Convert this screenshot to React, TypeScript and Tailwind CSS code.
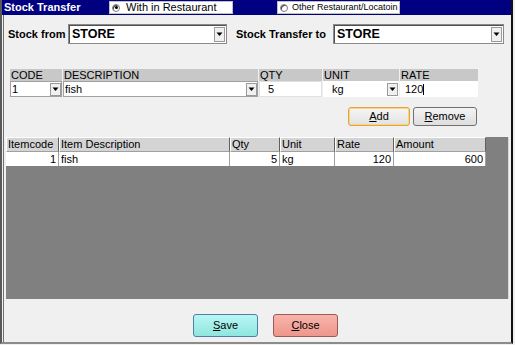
import React from "react";

const font = { fontFamily: '"Liberation Sans", Arial, sans-serif' };

function Arrow() {
  return (
    <svg width="7" height="5" viewBox="0 0 7 5">
      <path d="M0.5 0.5 H6.5 L3.5 4 Z" fill="#000" />
    </svg>
  );
}

function DropBtn({ h }: { h: string }) {
  return (
    <div className={`flex w-[11px] ${h} items-center justify-center border border-[#9a9a9a] bg-[#f0f0f0]`}>
      <Arrow />
    </div>
  );
}

function Radio({ checked }: { checked?: boolean }) {
  return (
    <div className="flex h-[8px] w-[8px] shrink-0 items-center justify-center rounded-full border border-[#808080] bg-white shadow-[inset_1px_1px_0_#404040]">
      {checked && <div className="h-[3px] w-[3px] rounded-full bg-black" />}
    </div>
  );
}

function BigSelect({ w, value }: { w: string; value: string }) {
  return (
    <div className={`flex h-[20px] ${w} items-center justify-between border border-[#8a8a8a] bg-white pl-[3px] pr-[1px] shadow-[inset_1px_1px_0_#505050]`}>
      <span className="text-[12.5px] font-bold leading-none text-black">{value}</span>
      <DropBtn h="h-[15px]" />
    </div>
  );
}

function Head({ children }: { children: React.ReactNode }) {
  return (
    <div className="flex h-[12px] items-center bg-[#c8c8c8] pl-px text-[11px] leading-none text-black">
      {children}
    </div>
  );
}

export default function App() {
  return (
    <div className="h-[345px] w-[515px] bg-[#f0f0f0]" style={font}>
      <div className="flex h-[344px] w-[513px] flex-col border-b-2 border-l-2 border-r-2 border-b-[#8c8c8c] border-l-[#5a5a5a] border-r-[#111]">
        {/* title bar */}
        <div className="flex h-[15px] items-center bg-[#000080]">
          <div className="w-[107px] pl-[2px] text-[11px] font-bold leading-none text-white">Stock Transfer</div>
          <div className="flex h-[13px] w-[124px] items-center gap-[6px] whitespace-nowrap border border-[#c0c0c0] bg-white pl-[2px] text-[11px] leading-none text-black">
            <Radio checked />
            <span>With in Restaurant</span>
          </div>
          <div className="ml-[44px] flex h-[13px] w-[123px] items-center gap-[4px] whitespace-nowrap border border-[#c0c0c0] bg-white pl-[2px] text-[9px] leading-none text-black">
            <Radio />
            <span>Other Restaurant/Locatoin</span>
          </div>
        </div>

        <div className="ml-px flex flex-1 flex-col border-l border-l-[#707070]">
          {/* stock from row */}
          <div className="mt-[9px] flex h-[20px] items-center pl-[4px]">
            <div className="w-[60px] text-[11px] font-bold text-black">Stock from</div>
            <BigSelect w="w-[159px]" value="STORE" />
            <div className="ml-[9px] w-[97px] text-[11px] font-bold text-black">Stock Transfer to</div>
            <BigSelect w="w-[171px]" value="STORE" />
          </div>

          {/* entry row */}
          <div className="mt-[25px] flex gap-px pl-[6px]">
            <div className="flex w-[52px] flex-col">
              <Head>CODE</Head>
              <div className="flex h-[16px] items-center justify-between border border-[#a0a0a0] bg-white pl-[1px] text-[11px]">
                <span>1</span>
                <DropBtn h="h-[13px]" />
              </div>
            </div>
            <div className="flex w-[195px] flex-col">
              <Head>DESCRIPTION</Head>
              <div className="flex h-[16px] items-center justify-between border border-[#a0a0a0] bg-white pl-[1px] text-[11px]">
                <span>fish</span>
                <DropBtn h="h-[13px]" />
              </div>
            </div>
            <div className="flex w-[63px] flex-col">
              <Head>QTY</Head>
              <div className="flex h-[16px] items-center border border-[#e0e0e0] bg-white pl-[8px] text-[11px]">5</div>
            </div>
            <div className="flex w-[76px] flex-col">
              <Head>UNIT</Head>
              <div className="flex h-[16px] items-center justify-between bg-white pl-[9px] pr-px text-[11px]">
                <span>kg</span>
                <DropBtn h="h-[13px]" />
              </div>
            </div>
            <div className="flex w-[78px] flex-col">
              <Head>RATE</Head>
              <div className="flex h-[16px] items-center bg-white pl-[5px] text-[11px]">
                <span>120</span>
                <span className="h-[11px] w-px bg-black" />
              </div>
            </div>
          </div>

          {/* add/remove */}
          <div className="mt-[10px] flex gap-[3px] pl-[344px]">
            <button className="flex h-[19px] w-[62px] items-center justify-center rounded-[3px] border border-[#e3a53b] bg-gradient-to-b from-[#f6f6f6] to-[#e2e2e2] text-[11px] text-black shadow-[inset_0_0_0_1px_#f7d48a]">
              <span><span className="underline">A</span>dd</span>
            </button>
            <button className="flex h-[19px] w-[64px] items-center justify-center rounded-[3px] border border-[#707070] bg-gradient-to-b from-[#f4f4f4] to-[#dedede] text-[11px] text-black">
              <span><span className="underline">R</span>emove</span>
            </button>
          </div>

          {/* grid */}
          <div className="ml-[2px] mt-[11px] h-[162px] w-[503px] border-r border-r-[#d8d8d8] bg-[#808080]">
            <div className="flex h-[15px] text-[11px] leading-none text-black">
              {[
                ["Itemcode", "w-[53px]"],
                ["Item Description", "w-[171px]"],
                ["Qty", "w-[50px]"],
                ["Unit", "w-[55px]"],
                ["Rate", "w-[59px]"],
                ["Amount", "w-[92px]"],
              ].map(([t, w]) => (
                <div
                  key={t}
                  className={`${w} flex items-center border-b border-l border-r border-t border-b-[#a0a0a0] border-l-white border-r-[#606060] border-t-white bg-[#d4d4d4] pl-px`}
                >
                  {t}
                </div>
              ))}
            </div>
            <div className="flex h-[14px] text-[11px] leading-none text-black">
              <div className="flex w-[53px] items-center justify-end border-r border-[#a0a0a0] bg-white pr-[2px]">1</div>
              <div className="flex w-[171px] items-center border-r border-[#a0a0a0] bg-white pl-[2px]">fish</div>
              <div className="flex w-[50px] items-center justify-end border-r border-[#a0a0a0] bg-white pr-[2px]">5</div>
              <div className="flex w-[55px] items-center border-r border-[#a0a0a0] bg-white pl-[2px]">kg</div>
              <div className="flex w-[59px] items-center justify-end border-r border-[#a0a0a0] bg-white pr-[2px]">120</div>
              <div className="flex w-[92px] items-center justify-end border-r border-[#a0a0a0] bg-white pr-[2px]">600</div>
            </div>
          </div>

          {/* save/close */}
          <div className="mt-[15px] flex gap-[15px] pl-[189px]">
            <button className="flex h-[23px] w-[65px] items-center justify-center rounded-[3px] border border-[#4f7ea8] bg-gradient-to-b from-[#b8f7f4] to-[#8ee6df] text-[11px] text-black">
              <span><span className="underline">S</span>ave</span>
            </button>
            <button className="flex h-[23px] w-[65px] items-center justify-center rounded-[3px] border border-[#9a5a55] bg-gradient-to-b from-[#f8b4ab] to-[#ee968b] text-[11px] text-black">
              <span><span className="underline">C</span>lose</span>
            </button>
          </div>
        </div>
      </div>
    </div>
  );
}
